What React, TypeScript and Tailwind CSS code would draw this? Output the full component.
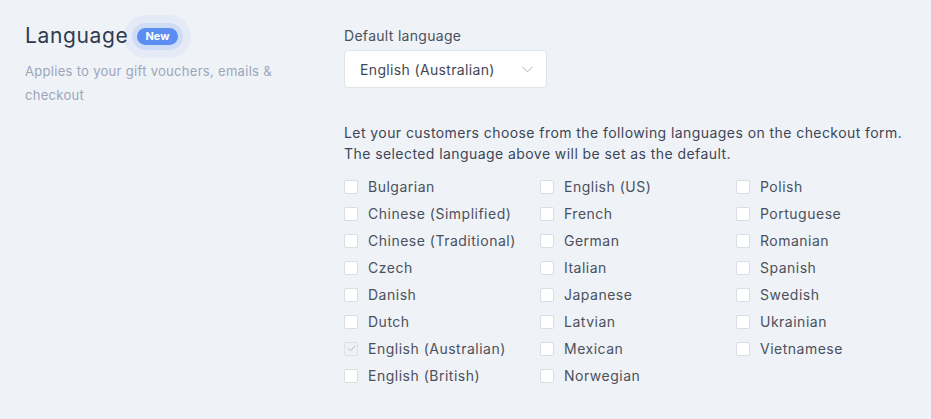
import React from "react";

const cols: string[][] = [
  ["Bulgarian", "Chinese (Simplified)", "Chinese (Traditional)", "Czech", "Danish", "Dutch", "English (Australian)", "English (British)"],
  ["English (US)", "French", "German", "Italian", "Japanese", "Latvian", "Mexican", "Norwegian"],
  ["Polish", "Portuguese", "Romanian", "Spanish", "Swedish", "Ukrainian", "Vietnamese"],
];

function Box({ checked }: { checked: boolean }) {
  if (checked) {
    return (
      <span className="flex h-[14px] w-[14px] shrink-0 items-center justify-center rounded-[2px] border border-[#dde1e7] bg-[#eef1f5]">
        <svg width="9" height="9" viewBox="0 0 10 10" fill="none">
          <path d="M1.5 5.2 L4 7.5 L8.5 2.5" stroke="#b4bac4" strokeWidth="1.1" strokeLinecap="round" strokeLinejoin="round" />
        </svg>
      </span>
    );
  }
  return <span className="h-[14px] w-[14px] shrink-0 rounded-[2px] border border-[#d9dde4] bg-white" />;
}

export default function App() {
  return (
    <div
      className="flex min-h-[419px] w-full bg-[#eff2f7] px-[25px] tracking-[0.3px]"
      style={{ fontFamily: "Inter, 'Noto Sans', sans-serif" }}
    >
      <div className="w-[319px] shrink-0 pt-[22px]">
        <div className="flex items-center">
          <h2 className="text-[21px] leading-[28px] font-normal text-[#2f3a4f] tracking-[0.65px]">Language</h2>
          <span className="ml-[9px] rounded-full bg-[#5b8ef0] px-[8px] text-[11px] leading-[17px] font-bold text-white tracking-normal shadow-[0_0_0_5px_rgba(91,142,240,0.16),0_0_0_13px_rgba(91,142,240,0.06)]">
            New
          </span>
        </div>
        <p className="mt-[9px] w-[260px] text-[13px] leading-[24px] text-[#9ba6ba]">
          Applies to your gift vouchers, emails &amp; checkout
        </p>
      </div>
      <div className="flex-1 pt-[26px]">
        <div className="text-[14px] leading-[20px] text-[#4b515c]">Default language</div>
        <div className="mt-[4px] flex h-[38px] w-[203px] items-center justify-between rounded-[4px] border border-[#dfe3ea] bg-white pl-[15px] pr-[13px]">
          <span className="text-[14px] tracking-[0.35px] text-[#3f4654]">English (Australian)</span>
          <svg width="11" height="7" viewBox="0 0 11 7" fill="none">
            <path d="M0.5 0.8 L5.5 5.8 L10.5 0.8" stroke="#a7adb7" strokeWidth="1" />
          </svg>
        </div>
        <p className="mt-[34px] text-[14px] leading-[21px] tracking-[0.43px] text-[#3d4658]">
          Let your customers choose from the following languages on the checkout form.
          <br />
          The selected language above will be set as the default.
        </p>
        <div className="mt-[9px] flex">
          {cols.map((col, ci) => (
            <div key={ci} className="flex w-[196px] flex-col">
              {col.map((l) => (
                <label key={l} className="flex h-[27px] items-center gap-[10px] text-[14px] tracking-[0.5px] text-[#4b515c]">
                  <Box checked={l === "English (Australian)"} />
                  <span>{l}</span>
                </label>
              ))}
            </div>
          ))}
        </div>
      </div>
    </div>
  );
}
